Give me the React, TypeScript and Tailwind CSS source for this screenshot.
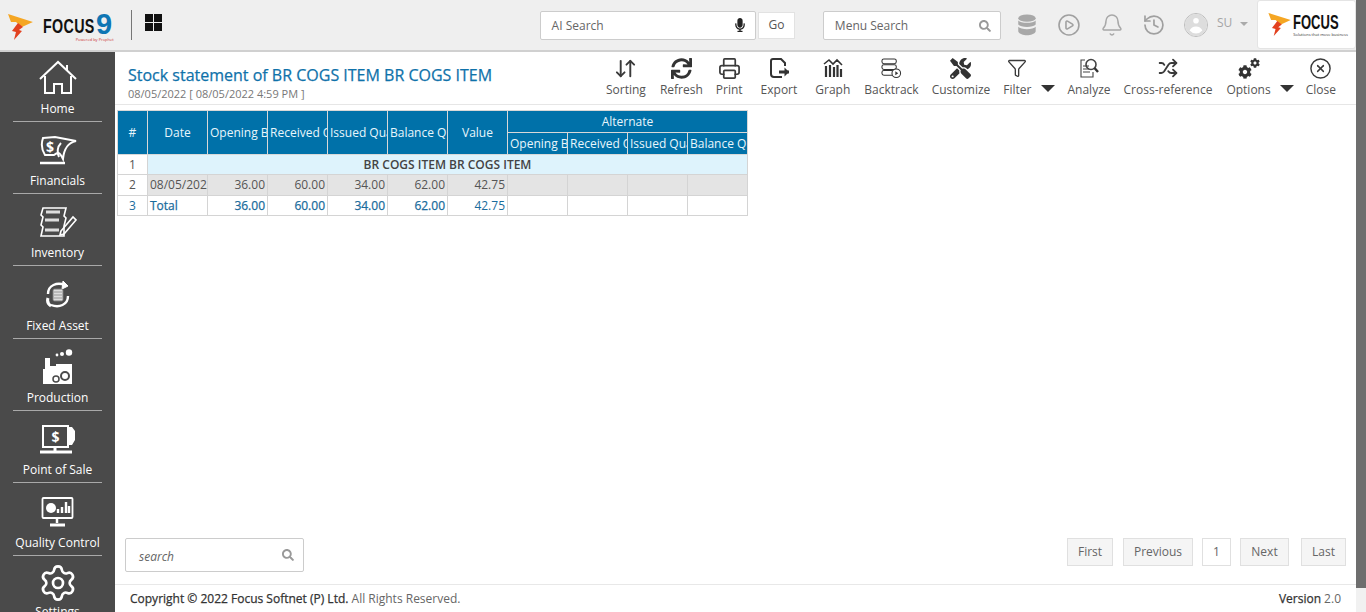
import React from "react";
import { Printer, Shuffle, Filter, CircleX, Bell, History, CirclePlay, ArrowDownUp, Settings } from "lucide-react";
import { FaMicrophone, FaSync, FaTools, FaCog, FaSearch } from "react-icons/fa";
import { HiUserCircle } from "react-icons/hi";

const FlameLogo = ({ className }: { className: string }) => (
  <svg viewBox="0 0 26 28" className={className}>
    <path d="M0 1 L25 9 L14 14 L8 9 L3 9 Z" fill="#f5a623" />
    <path d="M10 10 L15 14 L11 17 L14 18 L6 27 L8 19 L4 18 Z" fill="#e2411f" />
  </svg>
);

const Home = () => (
  <svg viewBox="0 0 38 36" className="w-[38px] h-[36px]" fill="none" stroke="#fff" strokeWidth="2">
    <path d="M1 19 L19 2 L37 19" />
    <path d="M28 5 V11" />
    <path d="M6 16 V33 H15 V24 H23 V33 H32 V16" />
  </svg>
);
const Money = () => (
  <svg viewBox="0 0 38 30" className="w-[38px] h-[30px]" fill="none" stroke="#fff" strokeWidth="2">
    <path d="M4 3 L16 2 L37 6 C29 8 25 13 24 24 C21 18 20 16 15 20 H6 C2 14 2 9 4 3 Z" />
    <path d="M22 8 C18 12 18 18 20 22" />
    <path d="M1 28 H26" strokeWidth="2.5" />
    <text x="11" y="17" fill="#fff" stroke="none" fontSize="14" fontWeight="700" textAnchor="middle" fontFamily="Open Sans, sans-serif">$</text>
  </svg>
);
const Inv = () => (
  <svg viewBox="0 0 38 32" className="w-[38px] h-[32px]" fill="none" stroke="#fff" strokeWidth="1.6">
    <path d="M4 2 H27 L25 10 L27 12 L25 20 V30 H2 L4 21 L2 19 L4 11 L2 9 Z" />
    <path d="M7 6 H21 M6 14 H20 M6 24 H20" strokeWidth="3" stroke="#ddd" />
    <path d="M22 25 L34 11 L37 14 L25 28 L21 29 Z" />
  </svg>
);
const Asset = () => (
  <svg viewBox="0 0 26 28" className="w-[26px] h-[28px]" fill="none" stroke="#fff" strokeWidth="2.4">
    <path d="M3 13 C3 4 12 1 20 4" />
    <path d="M18 0 L23 5 L17 8 Z" fill="#fff" strokeWidth="1" />
    <path d="M23 15 C23 24 14 27 6 24" />
    <path d="M3 17 C2 20 3 23 6 25" strokeWidth="3" />
    <rect x="8" y="8" width="10" height="12" rx="1.5" fill="#ddd" stroke="#777" strokeWidth="1" />
    <path d="M9 11 H17 M9 14 H17 M9 17 H17" stroke="#888" strokeWidth="0.8" />
  </svg>
);
const Prod = () => (
  <svg viewBox="0 0 32 36" className="w-[32px] h-[36px]">
    <circle cx="27" cy="3.5" r="3.2" fill="#fff" />
    <circle cx="20" cy="5" r="2" fill="#fff" />
    <circle cx="15" cy="6" r="1.4" fill="#fff" />
    <path d="M3 9 H8 V17 L14 17 L14 15 H30 V35 H1 V20 H3 Z" fill="#fff" />
    <circle cx="23" cy="27" r="4" fill="#fff" stroke="#4a4a4a" strokeWidth="2" />
    <circle cx="14" cy="30" r="3" fill="#fff" stroke="#4a4a4a" strokeWidth="1.5" />
  </svg>
);
const Pos = () => (
  <svg viewBox="0 0 38 30" className="w-[38px] h-[30px]" fill="none" stroke="#fff">
    <rect x="4" y="2" width="25" height="21" strokeWidth="2" />
    <path d="M1 28 H33" strokeWidth="3" />
    <path d="M16 23 V27" strokeWidth="3" />
    <path d="M29 3 H33 L36 7 V16 L33 21 H29 Z" fill="#fff" stroke="none" />
    <text x="16.5" y="18" fill="#fff" stroke="none" fontSize="14" fontWeight="700" textAnchor="middle" fontFamily="Open Sans, sans-serif">$</text>
  </svg>
);
const QC = () => (
  <svg viewBox="0 0 34 30" className="w-[34px] h-[30px]" fill="none" stroke="#fff">
    <rect x="1.5" y="1" width="30" height="20" rx="1" strokeWidth="1.8" />
    <circle cx="10" cy="11" r="5" fill="#fff" stroke="none" />
    <path d="M17 16 V12 M21 16 V10 M25 16 V5 M28 16 V9" strokeWidth="2.4" />
    <path d="M16 22 V26" strokeWidth="2.5" />
    <path d="M9 28 H24" strokeWidth="3" />
  </svg>
);
const Gear = () => <Settings className="w-[40px] h-[40px] text-white" strokeWidth={1.6} />;

const side: [string, React.ReactNode][] = [
  ["Home", <Home />],
  ["Financials", <Money />],
  ["Inventory", <Inv />],
  ["Fixed Asset", <Asset />],
  ["Production", <Prod />],
  ["Point of Sale", <Pos />],
  ["Quality Control", <QC />],
];

const Caret = ({ className }: { className: string }) => (
  <span className={"w-0 h-0 border-l-[7px] border-r-[7px] border-t-[7px] border-l-transparent border-r-transparent border-t-[#333] " + className} />
);

const Tool = ({ label, icon, className }: { label: string; icon: React.ReactNode; className?: string }) => (
  <div className={"flex flex-col items-center " + (className ?? "")}>
    <div className="h-[24px] flex items-center justify-center text-[#3a3a3a]">{icon}</div>
    <span className="text-[12px] leading-[16px] mt-[2px] text-[#555] whitespace-nowrap">{label}</span>
  </div>
);

const DbIcon = () => (
  <svg viewBox="0 0 20 24" className="ml-[16px] w-[20px] h-[22px]" fill="#a8a8a8">
    <ellipse cx="10" cy="4.5" rx="9.5" ry="4" />
    <path d="M0.5 7 C3 10.5 17 10.5 19.5 7 V11.5 C17 15 3 15 0.5 11.5 Z" />
    <path d="M0.5 14 C3 17.5 17 17.5 19.5 14 V19 C17 24.5 3 24.5 0.5 19 Z" />
  </svg>
);
const ExportIcon = () => (
  <svg viewBox="0 0 20 22" className="w-[20px] h-[22px]" fill="none" stroke="#333" strokeWidth="2">
    <path d="M13 20 H5 Q2 20 2 17 V4 Q2 2 4 2 H12 L16 6 V9" />
    <path d="M10 15 H20" strokeWidth="3" />
    <path d="M15.5 10.5 L20 15 L15.5 19.5 Z" fill="#333" stroke="none" />
  </svg>
);
const GraphIcon = () => (
  <svg viewBox="0 0 20 20" className="w-[20px] h-[20px]" fill="none" stroke="#333">
    <path d="M1 6 L6 2 L10 6 L14 2 L19 7" strokeWidth="1.6" />
    <path d="M3 19 V8 M7 19 V7 M11 19 V9 M14.5 19 V7 M18 19 V11" strokeWidth="2.2" />
  </svg>
);
const BackIcon = () => (
  <svg viewBox="0 0 22 22" className="w-[21px] h-[21px]" fill="none" stroke="#333" strokeWidth="1.1">
    <rect x="1" y="1" width="15" height="5" rx="2" />
    <rect x="1" y="7" width="15" height="5" rx="2" />
    <rect x="1" y="13" width="13" height="5" rx="2" />
    <circle cx="16" cy="16" r="4.5" fill="#fff" />
    <path d="M15 14 L18 16 L15 18 Z" fill="#333" stroke="none" />
  </svg>
);
const AnalyzeIcon = () => (
  <svg viewBox="0 0 20 20" className="w-[20px] h-[20px]" fill="none" stroke="#444" strokeWidth="1.1">
    <path d="M6 2 H2 V19 H14 V14" />
    <path d="M4 8 H10 M4 11 H10 M4 14 H11" />
    <circle cx="12" cy="6.5" r="5" strokeWidth="1.6" />
    <path d="M15.5 10 L19 14" strokeWidth="2.4" stroke="#333" />
  </svg>
);
const OptionsIcon = () => (
  <div className="w-[22px] h-[22px] flex items-end">
    <FaCog className="w-[14px] h-[14px] text-[#333] shrink-0" />
    <FaCog className="w-[10px] h-[10px] text-[#333] shrink-0 mb-[11px] -ml-[2px]" />
  </div>
);

const th = "border border-[#d8d8d8] font-normal text-[#e8f6fc] text-center overflow-hidden whitespace-nowrap";
const sub = "border border-[#d8d8d8] font-normal text-[#e8f6fc] overflow-hidden whitespace-nowrap text-left pl-[2px]";
const cell = "border border-[#d4d4d4] overflow-hidden whitespace-nowrap";
const td = cell + " text-right pr-[2px]";
const stroke = "[-webkit-text-stroke:0.25px_currentColor]";

export default function App() {
  return (
    <div className="w-[1366px] h-[612px] overflow-hidden flex bg-white font-['Open_Sans',sans-serif]">
      <div className="w-[1356px] h-full flex flex-col">
        {/* Header */}
        <header className="h-[52px] shrink-0 bg-[#efefef] border-b-2 border-[#d0d0d0] flex items-center relative">
          <FlameLogo className="w-[26px] h-[28px] ml-[8px] mt-[3px]" />
          <div className="ml-[9px] flex flex-col w-[71px] mt-[2px]">
            <div className="flex items-end font-['Liberation_Sans',sans-serif] font-bold h-[27px]">
              <span className="text-[21px] leading-[24px] text-[#111] scale-x-[0.68] origin-left w-[53px] shrink-0 tracking-[0.5px]">FOCUS</span>
              <span className="text-[29px] leading-[28px] text-[#0f76b4]">9</span>
            </div>
            <span className="text-[4px] leading-[4px] text-[#c33] text-right whitespace-nowrap">Powered by Prophet</span>
          </div>
          <div className="ml-[17px] w-[1px] h-[30px] bg-[#777]" />
          <div className="ml-[13px] mb-[5px] grid grid-cols-2 gap-[1px] w-[17px] h-[17px]">
            <span className="bg-[#111]" /><span className="bg-[#111]" /><span className="bg-[#111]" /><span className="bg-[#111]" />
          </div>
          <div className="ml-[378px] w-[217px] h-[29px] bg-white border border-[#ccc] rounded-[2px] flex items-center justify-between pl-[11px] pr-[9px]">
            <span className="text-[12px] text-[#666] pt-[2px]">AI Search</span>
            <FaMicrophone className="w-[12px] h-[14px] text-[#222]" />
          </div>
          <div className="ml-[2px] w-[37px] h-[27px] bg-white border border-[#e2e2e2] flex items-center justify-center text-[12px] text-[#555]">Go</div>
          <div className="ml-[28px] w-[179px] h-[29px] bg-white border border-[#ccc] rounded-[2px] flex items-center justify-between pl-[11px] pr-[9px]">
            <span className="text-[12px] text-[#666] pt-[2px]">Menu Search</span>
            <FaSearch className="w-[12px] h-[12px] text-[#999] mt-[2px]" />
          </div>
          <DbIcon />
          <CirclePlay className="ml-[20px] w-[24px] h-[24px] text-[#a0a0a0]" strokeWidth={1.6} />
          <Bell className="ml-[19px] w-[24px] h-[24px] text-[#a8a8a8]" strokeWidth={1.5} />
          <History className="ml-[18px] w-[24px] h-[24px] text-[#a0a0a0]" strokeWidth={1.7} />
          <div className="ml-[18px] w-[24px] h-[24px] rounded-full bg-white border border-[#bbb] overflow-hidden flex items-center justify-center">
            <HiUserCircle className="w-[28px] h-[28px] text-[#ddd] shrink-0" />
          </div>
          <span className="ml-[9px] mb-[5px] text-[12px] text-[#a5a5a5]">SU</span>
          <span className="ml-[8px] mb-[3px] w-0 h-0 border-l-[4px] border-r-[4px] border-t-[4px] border-l-transparent border-r-transparent border-t-[#aaa]" />
          <div className="ml-[9px] mt-[-2px] w-[99px] h-[49px] bg-white rounded-[3px] border border-[#e4e4e4] flex items-center pl-[10px]">
            <FlameLogo className="w-[24px] h-[25px]" />
            <div className="flex flex-col ml-[1px]">
              <span className="font-['Liberation_Sans',sans-serif] font-bold text-[21px] leading-[20px] text-[#111] scale-x-[0.62] origin-left w-[45px]">FOCUS</span>
              <span className="text-[4px] leading-[5px] text-[#333] whitespace-nowrap">Solutions that move business</span>
            </div>
          </div>
        </header>

        <div className="flex-1 flex min-h-0">
          {/* Sidebar */}
          <aside className="w-[115px] shrink-0 bg-[#4a4a4a] overflow-hidden">
            <div className="-mt-[2.5px] flex flex-col items-center">
              {side.map(([label, icon]) => (
                <div key={label} className="w-[89px] h-[72.33px] shrink-0 border-b border-[#a9a9a9] flex flex-col items-center justify-end pb-[4px]">
                  <div className="h-[40px] flex items-center justify-center">{icon}</div>
                  <span className="text-[12px] leading-[17px] mt-[2px] text-white whitespace-nowrap">{label}</span>
                </div>
              ))}
              <div className="mt-[7px] shrink-0 flex flex-col items-center">
                <Gear />
                <span className="text-[12px] leading-[17px] text-white">Settings</span>
              </div>
            </div>
          </aside>

          {/* Main */}
          <main className="flex-1 min-w-0 flex flex-col">
            <div className="h-[53px] shrink-0 border-b border-[#e6e6e6] flex relative">
              <div className="ml-[13px] pt-[13px] w-[470px]">
                <h1 className={"text-[16px] leading-[20px] font-medium text-[#0f72aa] whitespace-nowrap " + stroke}>Stock statement of BR COGS ITEM BR COGS ITEM</h1>
                <p className="text-[11px] leading-[15px] mt-[1px] text-[#777] whitespace-nowrap">08/05/2022 [ 08/05/2022 4:59 PM ]</p>
              </div>
              <div className="flex items-start pt-[4px] ml-[8px]">
                <Tool label="Sorting" icon={<ArrowDownUp className="w-[23px] h-[23px]" strokeWidth={2} />} />
                <Tool label="Refresh" className="ml-[14px]" icon={<FaSync className="w-[21px] h-[21px] text-[#333]" />} />
                <Tool label="Print" className="ml-[13px]" icon={<Printer className="w-[23px] h-[23px]" strokeWidth={1.8} />} />
                <Tool label="Export" className="ml-[18px]" icon={<ExportIcon />} />
                <Tool label="Graph" className="ml-[18px]" icon={<GraphIcon />} />
                <Tool label="Backtrack" className="ml-[14px]" icon={<BackIcon />} />
                <Tool label="Customize" className="ml-[13px]" icon={<FaTools className="w-[21px] h-[21px] text-[#333]" />} />
                <Tool label="Filter" className="ml-[13px]" icon={<Filter className="w-[20px] h-[22px]" strokeWidth={1.6} />} />
                <Caret className="ml-[10px] mt-[29px]" />
                <Tool label="Analyze" className="ml-[12px]" icon={<AnalyzeIcon />} />
                <Tool label="Cross-reference" className="ml-[13px]" icon={<Shuffle className="w-[20px] h-[20px]" strokeWidth={2.2} />} />
                <Tool label="Options" className="ml-[14px]" icon={<OptionsIcon />} />
                <Caret className="ml-[9px] mt-[29px]" />
                <Tool label="Close" className="ml-[12px]" icon={<CircleX className="w-[23px] h-[23px]" strokeWidth={1.5} />} />
              </div>
            </div>

            <div className="flex-1 min-h-0 pl-[2px] pt-[5px] relative">
              <table className="table-fixed border-collapse w-[630px] text-[12px] leading-[16px]">
                <colgroup>
                  <col className="w-[30px]" />
                  {Array.from({ length: 10 }).map((_, i) => <col key={i} className="w-[60px]" />)}
                </colgroup>
                <thead className="bg-[#0071a9]">
                  <tr className="h-[22px]">
                    <th rowSpan={2} className={th + " font-bold"}>#</th>
                    <th rowSpan={2} className={th}>Date</th>
                    <th rowSpan={2} className={sub}>Opening Balance</th>
                    <th rowSpan={2} className={sub}>Received Quantity</th>
                    <th rowSpan={2} className={sub}>Issued Quantity</th>
                    <th rowSpan={2} className={sub}>Balance Quantity</th>
                    <th rowSpan={2} className={th}>Value</th>
                    <th colSpan={4} className={th}>Alternate</th>
                  </tr>
                  <tr className="h-[22px]">
                    <th className={sub}>Opening Balance</th>
                    <th className={sub}>Received Quantity</th>
                    <th className={sub}>Issued Quantity</th>
                    <th className={sub}>Balance Quantity</th>
                  </tr>
                </thead>
                <tbody>
                  <tr className="h-[20px]">
                    <td className={cell + " text-center text-[#555]"}>1</td>
                    <td colSpan={10} className={cell + " bg-[#def3fc] text-center font-semibold text-[#444]"}>BR COGS ITEM BR COGS ITEM</td>
                  </tr>
                  <tr className="h-[21px] bg-[#e4e4e4] text-[#555]">
                    <td className={cell + " text-center bg-white"}>2</td>
                    <td className={cell + " text-left pl-[2px]"}>08/05/2022</td>
                    <td className={td}>36.00</td>
                    <td className={td}>60.00</td>
                    <td className={td}>34.00</td>
                    <td className={td}>62.00</td>
                    <td className={td}>42.75</td>
                    <td className={td} /><td className={td} /><td className={td} /><td className={td} />
                  </tr>
                  <tr className="h-[20px] text-[#1a6c9c] font-medium">
                    <td className={cell + " text-center font-normal"}>3</td>
                    <td className={cell + " text-left pl-[2px] " + stroke}>Total</td>
                    <td className={td + " " + stroke}>36.00</td>
                    <td className={td + " " + stroke}>60.00</td>
                    <td className={td + " " + stroke}>34.00</td>
                    <td className={td + " " + stroke}>62.00</td>
                    <td className={td + " font-normal"}>42.75</td>
                    <td className={td} /><td className={td} /><td className={td} /><td className={td} />
                  </tr>
                </tbody>
              </table>
            </div>

            <div className="h-[35px] mb-[11px] shrink-0 flex items-start justify-between pl-[10px] pr-[10px]">
              <div className="w-[179px] h-[34px] border border-[#ccc] rounded-[2px] flex items-center justify-between pl-[13px] pr-[9px]">
                <span className="text-[12px] italic text-[#666] pt-[4px]">search</span>
                <FaSearch className="w-[12px] h-[12px] text-[#999]" />
              </div>
              <div className="flex items-center text-[12px] text-[#666]">
                <span className="h-[28px] w-[46px] flex items-center justify-center bg-[#f5f5f5] border border-[#e0e0e0]">First</span>
                <span className="h-[28px] w-[70px] ml-[10px] flex items-center justify-center bg-[#f5f5f5] border border-[#e0e0e0]">Previous</span>
                <span className="h-[28px] w-[29px] ml-[9px] flex items-center justify-center bg-white border border-[#e0e0e0]">1</span>
                <span className="h-[28px] w-[49px] ml-[9px] flex items-center justify-center bg-[#f5f5f5] border border-[#e0e0e0]">Next</span>
                <span className="h-[28px] w-[45px] ml-[12px] flex items-center justify-center bg-[#f5f5f5] border border-[#e0e0e0]">Last</span>
              </div>
            </div>

            <footer className="h-[28px] shrink-0 border-t border-[#e8e8e8] flex items-center justify-between pl-[15px] pr-[15px] text-[12px] text-[#666]">
              <span><span className={"font-medium text-[#333] " + stroke}>Copyright © 2022 Focus Softnet (P) Ltd.</span> All Rights Reserved.</span>
              <span><span className={"font-medium text-[#333] " + stroke}>Version</span> 2.0</span>
            </footer>
          </main>
        </div>
      </div>
      {/* window scrollbar */}
      <div className="w-[10px] h-full flex flex-col bg-[#f1f1f1]">
        <div className="h-[588px] bg-[#6e6e6e]" />
      </div>
    </div>
  );
}
